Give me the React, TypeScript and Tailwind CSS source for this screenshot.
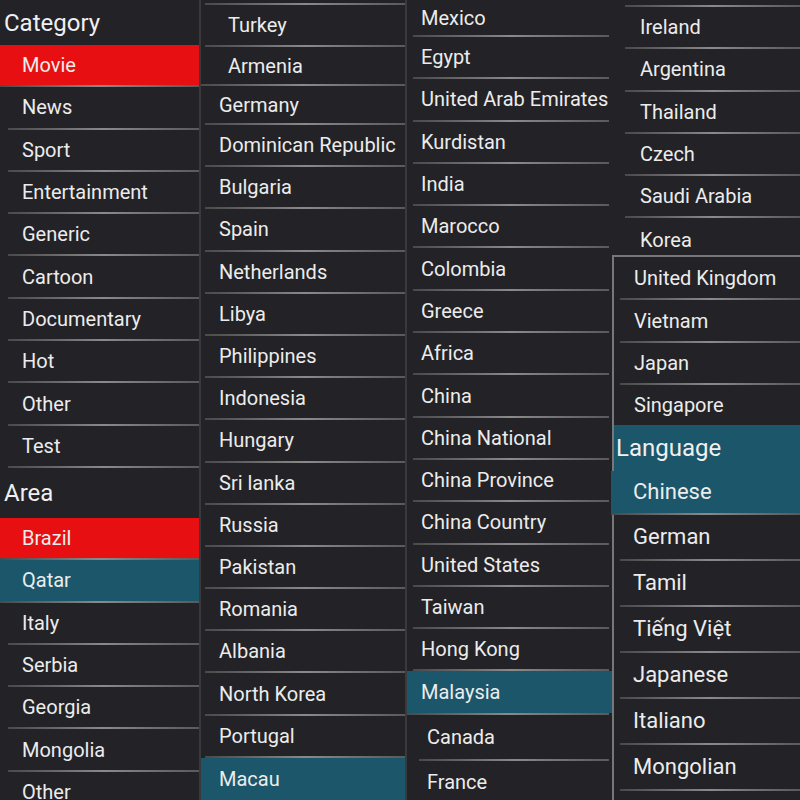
import React from 'react';

type RowProps = {
  label: string;
  h: string;
  pl: string;
  bg?: string;
  size?: string;
  line?: boolean;
  lineInset?: string;
};

const Line: React.FC<{ inset?: string }> = ({ inset = 'ml-2' }) => (
  <div className={`${inset} h-[2px] shrink-0 bg-linear-to-r from-[#4a4a4a] via-[#8a8a8a] to-[#5a5a5a]`} />
);

const Row: React.FC<RowProps> = ({ label, h, pl, bg = '', size = 'text-[20px]', line = true, lineInset }) => (
  <div className="flex flex-col shrink-0">
    <div className={`flex items-center ${h} ${pl} ${bg} ${size} text-[#ececec] leading-none whitespace-nowrap overflow-hidden`}>
      {label}
    </div>
    {line && <Line inset={lineInset} />}
  </div>
);

const Header: React.FC<{ label: string; h: string; pl?: string; bg?: string }> = ({ label, h, pl = 'pl-1', bg = '' }) => (
  <div className={`flex items-center shrink-0 ${h} ${pl} ${bg} text-[24px] text-[#f0f0f0] leading-none`}>{label}</div>
);

const categories = ['News', 'Sport', 'Entertainment', 'Generic', 'Cartoon', 'Documentary', 'Hot', 'Other', 'Test'];
const area1 = ['Italy', 'Serbia', 'Georgia', 'Mongolia', 'Other'];
const col2 = [
  'Dominican Republic', 'Bulgaria', 'Spain', 'Netherlands', 'Libya', 'Philippines', 'Indonesia',
  'Hungary', 'Sri lanka', 'Russia', 'Pakistan', 'Romania', 'Albania', 'North Korea', 'Portugal',
];
const col3 = [
  'Egypt', 'United Arab Emirates', 'Kurdistan', 'India', 'Marocco', 'Colombia', 'Greece', 'Africa', 'China',
  'China National', 'China Province', 'China Country', 'United States', 'Taiwan', 'Hong Kong',
];
const col4a = ['Ireland', 'Argentina', 'Thailand', 'Czech', 'Saudi Arabia'];
const languages = ['German', 'Tamil', 'Tiếng Việt', 'Japanese', 'Italiano', 'Mongolian'];

const App: React.FC = () => {
  return (
    <div
      className="flex w-[800px] h-[800px] overflow-hidden bg-[#232226]"
      style={{ fontFamily: 'Roboto, "Noto Sans", "Liberation Sans", sans-serif' }}
    >
      {/* Category / Area */}
      <div className="flex flex-col w-[199px] shrink-0">
        <Header label="Category" h="h-[45px]" />
        <Row label="Movie" h="h-[40.3px]" pl="pl-[22px]" bg="bg-[#e80f12]" lineInset="ml-0" />
        {categories.map((c) => (
          <Row key={c} label={c} h="h-[40.3px]" pl="pl-[22px]" />
        ))}
        <Header label="Area" h="h-[50px]" />
        <Row label="Brazil" h="h-[40.3px]" pl="pl-[22px]" bg="bg-[#e80f12]" lineInset="ml-0" />
        <Row label="Qatar" h="h-[40.3px]" pl="pl-[22px]" bg="bg-[#1b566b]" lineInset="ml-0" />
        {area1.map((c, i) => (
          <Row key={c + i} label={c} h="h-[40.3px]" pl="pl-[22px]" />
        ))}
      </div>

      {/* Countries 1 */}
      <div className="flex flex-col w-[206px] shrink-0 border-l-2 border-[#3a3a3c]">
        <div className="h-[3px] shrink-0" />
        <Line inset="ml-1" />
        <Row label="Turkey" h="h-[40px]" pl="pl-[27px]" lineInset="ml-1" />
        <Row label="Armenia" h="h-[37px]" pl="pl-[27px]" lineInset="ml-0" />
        <Row label="Germany" h="h-[37px]" pl="pl-[18px]" lineInset="ml-1" />
        {col2.map((c) => (
          <Row key={c} label={c} h="h-[40.2px]" pl="pl-[18px]" lineInset="ml-1" />
        ))}
        <Row label="Macau" h="h-[42px]" pl="pl-[18px]" bg="bg-[#1b566b]" lineInset="ml-0" />
      </div>

      {/* Countries 2 */}
      <div className="flex flex-col w-[207px] shrink-0 border-l-2 border-[#3a3a3c]">
        <Row label="Mexico" h="h-[35px]" pl="pl-[14px]" lineInset="ml-[6px] mr-[3px]" />
        {col3.map((c) => (
          <Row key={c} label={c} h="h-[40.3px]" pl="pl-[14px]" lineInset="ml-[6px] mr-[3px]" />
        ))}
        <Row label="Malaysia" h="h-[42px]" pl="pl-[14px]" bg="bg-[#1b566b]" lineInset="ml-0 mr-[3px]" />
        <Row label="Canada" h="h-[44px]" pl="pl-[20px]" lineInset="ml-[12px] mr-[3px]" />
        <Row label="France" h="h-[42px]" pl="pl-[20px]" lineInset="ml-[12px] mr-[3px]" />
      </div>

      {/* Countries 3 / Language */}
      <div className="flex flex-col flex-1 min-w-0">
        <div className="h-[5px] shrink-0" />
        <Line inset="ml-[13px]" />
        {col4a.map((c) => (
          <Row key={c} label={c} h="h-[40.3px]" pl="pl-[28px]" lineInset="ml-[13px]" />
        ))}
        <div className="flex items-start h-[37px] shrink-0 pt-[12px] pl-[28px] text-[20px] text-[#ececec] leading-none overflow-hidden">
          Korea
        </div>
        <div className="flex flex-col flex-1 border-l-2 border-t-2 border-[#77777a]">
          <Row label="United Kingdom" h="h-[41px]" pl="pl-[20px]" lineInset="ml-[6px]" />
          <Row label="Vietnam" h="h-[40.3px]" pl="pl-[20px]" lineInset="ml-[6px]" />
          <Row label="Japan" h="h-[40.3px]" pl="pl-[20px]" lineInset="ml-[6px]" />
          <Row label="Singapore" h="h-[40px]" pl="pl-[20px]" line={false} />
          <Header label="Language" h="h-[46px]" pl="pl-[2px]" bg="bg-[#1b566b]" />
          <div className="-ml-[3px]">
            <Row label="Chinese" h="h-[42px]" pl="pl-[22px]" bg="bg-[#1b566b]" size="text-[22px]" lineInset="ml-0" />
          </div>
          {languages.map((c) => (
            <Row key={c} label={c} h="h-[44px]" pl="pl-[19px]" size="text-[22px]" lineInset="ml-[6px]" />
          ))}
        </div>
      </div>
    </div>
  );
};

export default App;
